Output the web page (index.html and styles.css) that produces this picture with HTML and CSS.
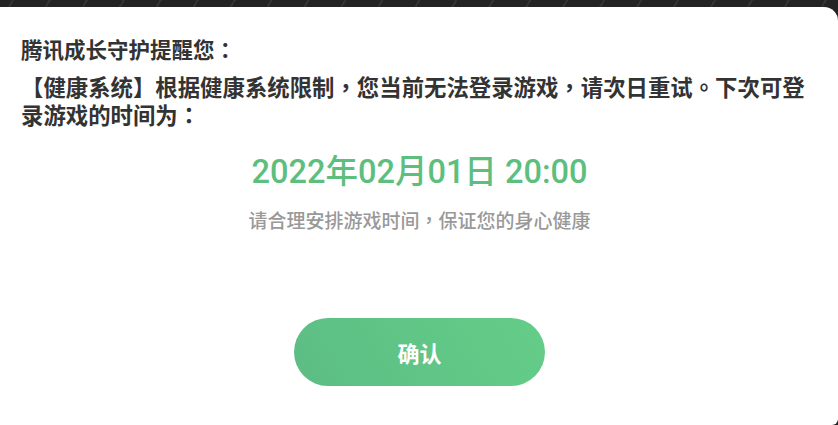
FILE: index.html
```html
<!DOCTYPE html>
<html lang="zh-TW">
<head>
<meta charset="utf-8">
<link rel="stylesheet" href="styles.css">
</head>
<body>
<div class="stage">
  <div class="card">
    <div class="title">腾讯成长守护提醒您：</div>
    <div class="msg">【健康系统】根据健康系统限制，您当前无法登录游戏，请次日重试。下次可登录游戏的时间为：</div>
    <div class="time">2022年02月01日 20:00</div>
    <div class="tip">请合理安排游戏时间，保证您的身心健康</div>
    <div class="actions"><button class="btn">确认</button></div>
  </div>
</div>
</body>
</html>
```
FILE: styles.css
```css
html, body {
  margin: 0;
  padding: 0;
  width: 838px;
  height: 425px;
  overflow: hidden;
  background: #222222;
}
.stage {
  width: 838px;
  height: 425px;
  padding-top: 7px;
  box-sizing: border-box;
  background: repeating-linear-gradient(-60deg, #232323 0, #232323 30px, #333 30px, #333 32px) #222;
}
.card {
  background: #ffffff;
  height: 418px;
  border-radius: 0 14px 6px 0;
  box-sizing: border-box;
  padding: 27px 20px 0 21px;
  font-family: "Noto Sans CJK TC", sans-serif;
  color: #333333;
}
.title {
  font-size: 21.5px;
  font-weight: 700;
  line-height: 30px;
}
.msg {
  font-size: 22.4px;
  font-weight: 700;
  line-height: 28px;
  margin-top: 8px;
}
.time {
  text-align: center;
  color: #5dbe7e;
  font-family: Roboto, "Noto Sans CJK TC", sans-serif;
  font-size: 32.5px;
  font-weight: 500;
  line-height: 40px;
  margin-top: 24px;
}
.tip {
  text-align: center;
  color: #999999;
  font-size: 19px;
  font-weight: 500;
  line-height: 26px;
  margin-top: 15px;
}
.actions {
  display: flex;
  justify-content: center;
  margin-top: 85px;
}
.btn {
  width: 251px;
  height: 68px;
  border: none;
  border-radius: 34px;
  background: linear-gradient(60deg, #5cbd84, #64cd88);
  color: #ffffff;
  font-family: "Noto Sans CJK TC", sans-serif;
  font-size: 22px;
  font-weight: 700;
}
```
